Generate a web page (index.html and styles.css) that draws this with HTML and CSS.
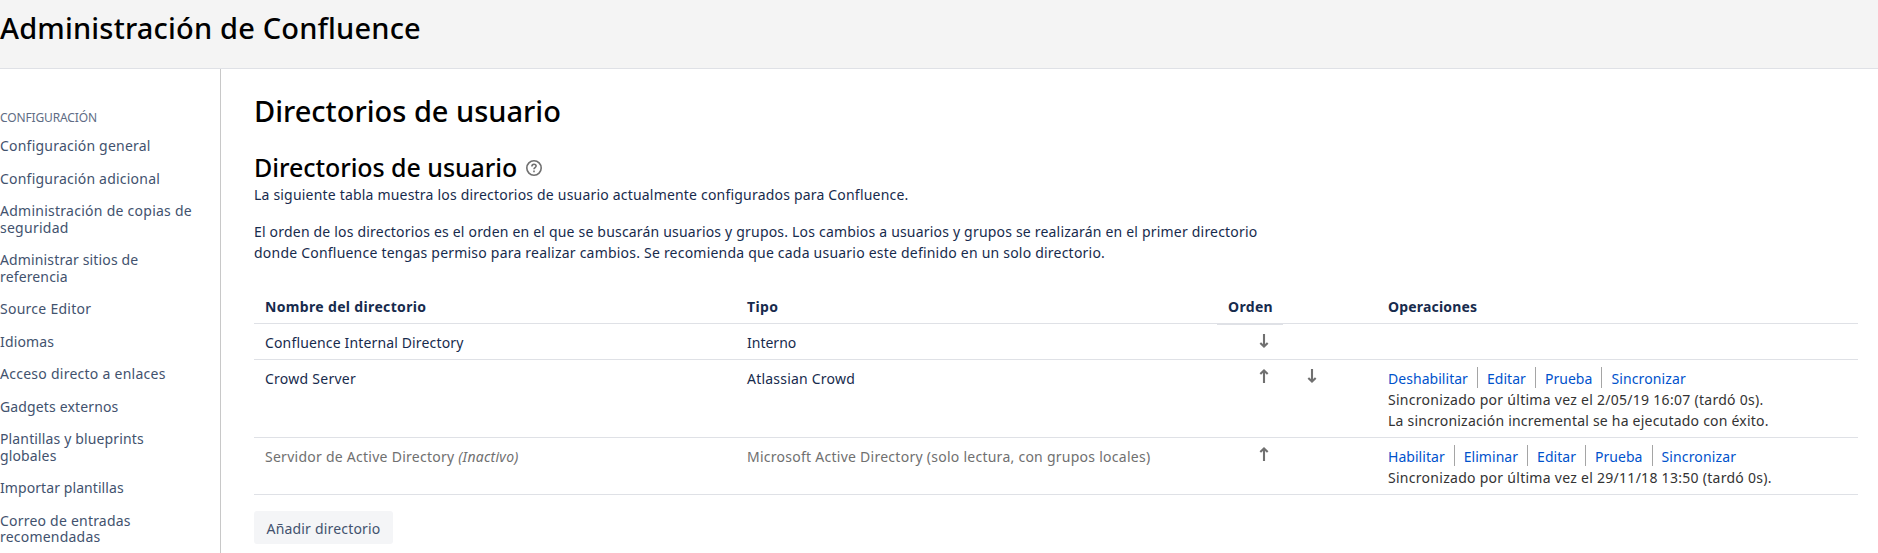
FILE: index.html
```
<!DOCTYPE html>
<html lang="es">
<head>
<meta charset="utf-8">
<title>Administración de Confluence</title>
<link rel="stylesheet" href="styles.css">
</head>
<body>
<svg class="sprite" aria-hidden="true">
  <symbol id="arrow-down" viewBox="0 0 10 16"><path d="M5 1v12.6M1.3 9.9 5 13.5l3.7-3.6"/></symbol>
  <symbol id="arrow-up" viewBox="0 0 10 16"><path d="M5 15V2.4M1.3 6.1 5 2.5l3.7 3.6"/></symbol>
</svg>
<header class="page-header"><h1 class="site-title">Administración de Confluence</h1></header>
<div class="layout">
  <nav class="sidebar">
    <h2 class="nav-heading">Configuración</h2>
    <ul class="nav-list">
      <li class="wide"><a>Configuración general</a></li>
      <li class="wide"><a>Configuración adicional</a></li>
      <li class="wider"><a>Administración de copias de<br>seguridad</a></li>
      <li><a>Administrar sitios de<br>referencia</a></li>
      <li class="wider"><a>Source Editor</a></li>
      <li><a>Idiomas</a></li>
      <li class="wider"><a>Acceso directo a enlaces</a></li>
      <li><a>Gadgets externos</a></li>
      <li><a>Plantillas y blueprints<br>globales</a></li>
      <li class="tight"><a>Importar plantillas</a></li>
      <li class="wide"><a>Correo de entradas<br>recomendadas</a></li>
    </ul>
  </nav>
  <main class="content">
    <h1 class="content-title">Directorios de usuario</h1>
    <h2 class="section-title">Directorios de usuario
      <svg class="help" viewBox="0 0 16 16"><circle cx="8" cy="8" r="7.2"/><path d="M5.9 6.5C5.9 5 6.8 4.2 8 4.2s2.1.8 2.1 1.9c0 1.5-2.1 1.6-2.1 3.2"/><path d="M8 10.6v1.7"/></svg>
    </h2>
    <p class="intro">La siguiente tabla muestra los directorios de usuario actualmente configurados para Confluence.</p>
    <p class="intro">El orden de los directorios es el orden en el que se buscarán usuarios y grupos. Los cambios a usuarios y grupos se realizarán en el primer directorio<br><span class="wide">donde Confluence tengas permiso para realizar cambios. Se recomienda que cada usuario este definido en un solo directorio.</span></p>
    <table class="directories">
      <colgroup><col class="c-name"><col class="c-type"><col class="c-up"><col class="c-down"><col></colgroup>
      <thead><tr><th>Nombre del directorio</th><th>Tipo</th><th class="order">Orden</th><th></th><th>Operaciones</th></tr></thead>
      <tbody>
        <tr><td>Confluence Internal Directory</td><td class="exact">Interno</td><td class="move low"><svg class="arrow"><use href="#arrow-down"/></svg></td><td></td><td></td></tr>
        <tr><td class="wider">Crowd Server</td><td class="wide">Atlassian Crowd</td><td class="move"><svg class="arrow"><use href="#arrow-up"/></svg></td><td class="move next"><svg class="arrow"><use href="#arrow-down"/></svg></td>
          <td><ul class="ops"><li><a>Deshabilitar</a></li><li><a>Editar</a></li><li><a>Prueba</a></li><li><a class="last">Sincronizar</a></li></ul>
          <p class="sync">Sincronizado por última vez el 2/05/19 16:07 (tardó 0s).</p><p class="sync wide">La sincronización incremental se ha ejecutado con éxito.</p></td></tr>
        <tr class="inactive"><td class="wider">Servidor de Active Directory <em>(Inactivo)</em></td><td class="wider">Microsoft Active Directory (solo lectura, con grupos locales)</td><td class="move"><svg class="arrow"><use href="#arrow-up"/></svg></td><td></td>
          <td><ul class="ops"><li><a>Habilitar</a></li><li><a>Eliminar</a></li><li><a>Editar</a></li><li><a>Prueba</a></li><li><a class="last">Sincronizar</a></li></ul>
          <p class="sync">Sincronizado por última vez el 29/11/18 13:50 (tardó 0s).</p></td></tr>
      </tbody>
    </table>
    <button class="add">Añadir directorio</button>
  </main>
</div>
</body>
</html>
```
FILE: styles.css
```
* { box-sizing: border-box; }
body { margin: 0; height: 553px; overflow: hidden; background: #fff; color: #172b4d; font: 14px/21px "Noto Sans", sans-serif; }
h1, h2, p, ul { margin: 0; padding: 0; }
ul { list-style: none; }
.sprite { display: none; }
.page-header { height: 69px; background: #f4f4f4; border-bottom: 1px solid #dfe1e6; }
.site-title { padding-top: 11px; font-size: 29px; line-height: 34px; font-weight: 500; letter-spacing: 0.18px; color: #000; }
.layout { display: flex; height: 484px; }
.sidebar { width: 221px; padding-top: 40px; border-right: 1px solid #c8c8c8; }
.nav-heading { font-size: 12px; line-height: 18px; font-weight: 400; letter-spacing: -0.13px; text-transform: uppercase; color: #5e6c84; }
.nav-list { padding-top: 11px; color: #42526e; line-height: 16.5px; letter-spacing: 0.14px; }
.nav-list li { padding-bottom: 16px; }
.content { flex: 1; padding: 24px 20px 0 33px; }
.content-title { font-size: 29px; line-height: 36px; font-weight: 500; color: #000; }
.section-title { display: flex; align-items: center; gap: 9px; margin-top: 23px; padding-bottom: 2px; font-size: 25px; line-height: 30px; font-weight: 500; letter-spacing: -0.06px; color: #000; }
.help { width: 16px; height: 16px; margin-top: 2px; fill: none; stroke: #707070; stroke-width: 1.6; }
.intro { letter-spacing: 0.195px; }
.intro + .intro { margin-top: 16px; }
.directories { width: 1604px; margin-top: 25px; table-layout: fixed; border-collapse: separate; border-spacing: 0; letter-spacing: 0.15px; }
.c-name { width: 482px; } .c-type { width: 481px; } .c-up { width: 66px; } .c-down { width: 94px; }
.directories th, .directories td { padding: 8px 11px 6px; border-bottom: 1px solid #dfe1e6; text-align: left; vertical-align: top; }
.directories th { letter-spacing: 0.34px; }
.directories th:last-child { letter-spacing: 0.18px; }
.order { position: relative; }
.order::after { content: ""; position: absolute; left: 0; right: 0; bottom: -2px; height: 1px; background: #dfe1e6; }
.directories .move { padding: 8px 0 0 42px; }
.directories .low { padding-top: 9px; }
.directories .next { padding-left: 24px; }
.arrow { display: block; width: 10px; height: 16px; fill: none; stroke: #707070; stroke-width: 2.1; }
.inactive { color: #707070; }
.ops { display: flex; margin-top: -1px; padding-bottom: 1px; color: #0052cc; letter-spacing: 0.04px; }
.ops a { position: relative; top: 1px; }
.ops li + li { margin-left: 9px; padding-left: 9px; border-left: 1px solid #a5a5a5; }
.ops .last { letter-spacing: 0.13px; }
.sync { color: #333; letter-spacing: 0.28px; }
.add { display: block; width: 139px; height: 33px; margin-top: 16px; padding: 1px 0 0; border: 0; border-radius: 3px; background: #f4f5f7; color: #42526e; font: inherit; letter-spacing: 0.18px; }
.wide { letter-spacing: 0.215px; }
.wider { letter-spacing: 0.26px; }
.tight { letter-spacing: 0.08px; }
.exact { letter-spacing: 0; }
```
